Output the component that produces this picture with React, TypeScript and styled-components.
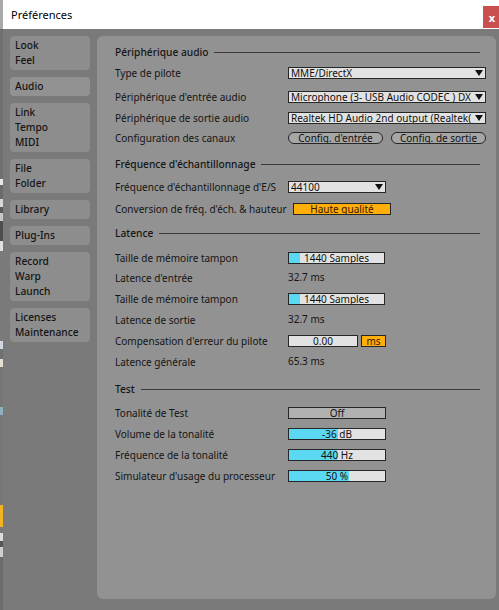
import React from "react";
import styled, { createGlobalStyle } from "styled-components";

const GlobalStyle = createGlobalStyle`
  html, body { margin: 0; padding: 0; }
  body {
    width: 499px;
    height: 610px;
    overflow: hidden;
    background: #777777;
    font-family: "Noto Sans", "DejaVu Sans", sans-serif;
  }
  * { box-sizing: border-box; }
`;

const Frame = styled.div`
  display: flex;
  width: 499px;
  height: 610px;
`;

const Strip = styled.div`
  width: 3px;
  display: flex;
  flex-direction: column;
  background: #6d6d6d;
`;

const StripBit = styled.div<{ $h: number; $c: string }>`
  height: ${(p) => p.$h}px;
  background: ${(p) => p.$c};
  flex: none;
`;

const Window = styled.div`
  flex: 1;
  display: flex;
  flex-direction: column;
`;

const TitleBar = styled.div`
  height: 29px;
  background: #ffffff;
  display: flex;
  justify-content: space-between;
  align-items: flex-start;
  padding-left: 8px;
`;

const Title = styled.div`
  font-family: "Noto Sans", sans-serif;
  font-size: 11px;
  line-height: 29px;
  color: #000;
`;

const CloseBtn = styled.div`
  width: 16px;
  height: 22px;
  margin-top: 6px;
  background: #c9504f;
  color: #fff;
  font-size: 11px;
  font-weight: 700;
  display: flex;
  align-items: center;
  justify-content: center;
  padding-left: 2px;
`;

const Body = styled.div`
  flex: 1;
  background: #7a7a7a;
  display: flex;
  padding: 7px 3px 11px 7px;
  gap: 7px;
`;

const Sidebar = styled.div`
  width: 80px;
  display: flex;
  flex-direction: column;
  gap: 7px;
`;

const Tab = styled.div<{ $active?: boolean }>`
  background: ${(p) => (p.$active ? "#929292" : "#8d8d8d")};
  border-radius: 4px;
  padding: 2px 5px;
  font-size: 10.2px;
  line-height: 15px;
  font-weight: 500;
  color: #141414;
`;

const Panel = styled.div`
  flex: 1;
  background: #929292;
  border-radius: 6px;
  padding: 9px 10px 0 18px;
  display: flex;
  flex-direction: column;
  color: #151515;
`;

const Header = styled.div<{ $mt: number }>`
  display: flex;
  align-items: center;
  height: 14px;
  margin-top: ${(p) => p.$mt}px;
  font-size: 10.2px;
  font-weight: 500;
  white-space: nowrap;
  gap: 6px;
`;

const HeaderLine = styled.div`
  flex: 1;
  height: 1px;
  background: #3a3a3a;
  margin-right: 6px;
`;

const Row = styled.div<{ $mt: number }>`
  display: flex;
  align-items: center;
  height: 12px;
  margin-top: ${(p) => p.$mt}px;
  white-space: nowrap;
`;

const Label = styled.div<{ $w?: number }>`
  width: ${(p) => p.$w ?? 173}px;
  flex: none;
  font-size: 10px;
  line-height: 12px;
`;

const Controls = styled.div`
  display: flex;
  align-items: center;
  gap: 3px;
  height: 12px;
`;

const BoxBase = styled.div<{ $w: number }>`
  width: ${(p) => p.$w}px;
  height: 12px;
  border: 1px solid #262626;
  font-size: 10px;
  line-height: 10px;
  color: #111;
  flex: none;
  overflow: hidden;
  white-space: nowrap;
`;

const Dropdown = styled(BoxBase)`
  background: #e2e2e2;
  display: flex;
  align-items: center;
  justify-content: space-between;
  padding: 0 2px 0 2px;
`;

const DropText = styled.span`
  overflow: hidden;
  flex: 1;
  min-width: 0;
`;

const Arrow = styled.svg`
  flex: none;
  width: 8px;
  height: 6px;
  margin-left: 1px;
`;

const Pill = styled(BoxBase)`
  background: #a6a6a6;
  border-radius: 6px;
  text-align: center;
`;

const PillGroup = styled.div`
  display: flex;
  gap: 8px;
`;

const Toggle = styled(BoxBase)<{ $on?: boolean }>`
  background: ${(p) => (p.$on ? "#ffae0a" : "#b1b1b1")};
  color: ${(p) => (p.$on ? "#3d1500" : "#111")};
  text-align: center;
`;

const Bar = styled(BoxBase)`
  position: relative;
  background: #e2e2e2;
  text-align: center;
`;

const BarFill = styled.div`
  position: absolute;
  left: 0;
  top: 0;
  bottom: 0;
  background: #5bd8f2;
`;

const BarText = styled.span`
  position: relative;
`;

const Value = styled.div`
  font-size: 10px;
  line-height: 12px;
  margin-top: -3px;
`;

const strip: [number, string][] = [
  [29, "#a9a9a9"],
  [150, "#707070"],
  [6, "#e8e8e8"],
  [14, "#6a6a6a"],
  [8, "#d8d8d8"],
  [6, "#5a5a5a"],
  [8, "#c8c8c8"],
  [20, "#4e4e4e"],
  [10, "#e0e0e0"],
  [90, "#7a7a7a"],
  [8, "#cfd8e0"],
  [10, "#707070"],
  [8, "#e6e0d0"],
  [40, "#757575"],
  [8, "#8fb0c0"],
  [90, "#777777"],
  [22, "#f2b223"],
  [6, "#777777"],
  [8, "#dcdcdc"],
  [6, "#555555"],
  [10, "#cfcfcf"],
  [40, "#6b6b6b"],
];

const tabs: { lines: string[]; active?: boolean }[] = [
  { lines: ["Look", "Feel"] },
  { lines: ["Audio"], active: true },
  { lines: ["Link", "Tempo", "MIDI"] },
  { lines: ["File", "Folder"] },
  { lines: ["Library"] },
  { lines: ["Plug-Ins"] },
  { lines: ["Record", "Warp", "Launch"] },
  { lines: ["Licenses", "Maintenance"] },
];

const DropArrow = () => (
  <Arrow viewBox="0 0 8 6">
    <polygon points="0,0 8,0 4,6" fill="#111" />
  </Arrow>
);

const Select = ({ w, text }: { w: number; text: string }) => (
  <Dropdown $w={w}>
    <DropText>{text}</DropText>
    <DropArrow />
  </Dropdown>
);

const Meter = ({ w, fill, text }: { w: number; fill: number; text: string }) => (
  <Bar $w={w}>
    <BarFill style={{ width: `${fill}px` }} />
    <BarText>{text}</BarText>
  </Bar>
);

export default function App() {
  return (
    <>
      <GlobalStyle />
      <Frame>
        <Strip>
          {strip.map(([h, c], i) => (
            <StripBit key={i} $h={h} $c={c} />
          ))}
        </Strip>
        <Window>
          <TitleBar>
            <Title>Préférences</Title>
            <CloseBtn>x</CloseBtn>
          </TitleBar>
          <Body>
            <Sidebar>
              {tabs.map((t) => (
                <Tab key={t.lines[0]} $active={t.active}>
                  {t.lines.map((l) => (
                    <div key={l}>{l}</div>
                  ))}
                </Tab>
              ))}
            </Sidebar>
            <Panel>
              <Header $mt={0}>
                Périphérique audio
                <HeaderLine />
              </Header>
              <Row $mt={8}>
                <Label>Type de pilote</Label>
                <Select w={198} text="MME/DirectX" />
              </Row>
              <Row $mt={12}>
                <Label>Périphérique d'entrée audio</Label>
                <Select w={198} text="Microphone (3- USB Audio CODEC ) DX" />
              </Row>
              <Row $mt={9}>
                <Label>Périphérique de sortie audio</Label>
                <Select w={198} text="Realtek HD Audio 2nd output (Realtek(" />
              </Row>
              <Row $mt={8}>
                <Label>Configuration des canaux</Label>
                <PillGroup>
                  <Pill $w={95}>Config. d'entrée</Pill>
                  <Pill $w={95}>Config. de sortie</Pill>
                </PillGroup>
              </Row>

              <Header $mt={13}>
                Fréquence d'échantillonnage
                <HeaderLine />
              </Header>
              <Row $mt={10}>
                <Label>Fréquence d'échantillonnage d'E/S</Label>
                <Select w={98} text="44100" />
              </Row>
              <Row $mt={10}>
                <Label $w={178}>Conversion de fréq. d'éch. &amp; hauteur</Label>
                <Toggle $w={98} $on>
                  Haute qualité
                </Toggle>
              </Row>

              <Header $mt={11}>
                Latence
                <HeaderLine />
              </Header>
              <Row $mt={12}>
                <Label>Taille de mémoire tampon</Label>
                <Meter w={97} fill={11} text="1440 Samples" />
              </Row>
              <Row $mt={8}>
                <Label>Latence d'entrée</Label>
                <Value>32.7 ms</Value>
              </Row>
              <Row $mt={9}>
                <Label>Taille de mémoire tampon</Label>
                <Meter w={97} fill={11} text="1440 Samples" />
              </Row>
              <Row $mt={9}>
                <Label>Latence de sortie</Label>
                <Value>32.7 ms</Value>
              </Row>
              <Row $mt={9}>
                <Label>Compensation d'erreur du pilote</Label>
                <Controls>
                  <Bar $w={70}>
                    <BarText>0.00</BarText>
                  </Bar>
                  <Toggle $w={25} $on>
                    ms
                  </Toggle>
                </Controls>
              </Row>
              <Row $mt={9}>
                <Label>Latence générale</Label>
                <Value>65.3 ms</Value>
              </Row>

              <Header $mt={14}>
                Test
                <HeaderLine />
              </Header>
              <Row $mt={11}>
                <Label>Tonalité de Test</Label>
                <Toggle $w={98}>Off</Toggle>
              </Row>
              <Row $mt={9}>
                <Label>Volume de la tonalité</Label>
                <Meter w={98} fill={49} text="-36 dB" />
              </Row>
              <Row $mt={9}>
                <Label>Fréquence de la tonalité</Label>
                <Meter w={98} fill={48} text="440 Hz" />
              </Row>
              <Row $mt={9}>
                <Label>Simulateur d'usage du processeur</Label>
                <Meter w={98} fill={60} text="50 %" />
              </Row>
            </Panel>
          </Body>
        </Window>
      </Frame>
    </>
  );
}
